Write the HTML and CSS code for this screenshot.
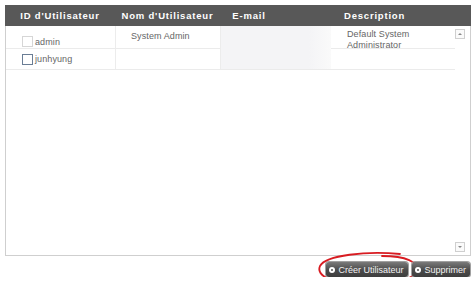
FILE: index.html
```html
<!DOCTYPE html>
<html>
<head>
<meta charset="utf-8">
<link rel="stylesheet" href="styles.css">
</head>
<body>
<div class="wrap">
  <div class="thead">
    <div class="th">ID d'Utilisateur</div>
    <div class="th">Nom d'Utilisateur</div>
    <div class="th">E-mail</div>
    <div class="th">Description</div>
  </div>
  <div class="tbody">
    <div class="rows">
      <div class="row r1">
        <div class="td c1 idcell"><span class="cb cb-off"></span>admin</div>
        <div class="td c2 namecell">System Admin</div>
        <div class="td mail"></div>
        <div class="td desc">Default System<br>Administrator</div>
      </div>
      <div class="row r2">
        <div class="td c1 idcell"><span class="cb"></span>junhyung</div>
        <div class="td c2"></div>
        <div class="td mail"></div>
        <div class="td"></div>
      </div>
    </div>
    <div class="scroll">
      <div class="arrow up"><span class="tri tri-up"></span></div>
      <div class="arrow down"><span class="tri tri-down"></span></div>
    </div>
  </div>
  <div class="actions">
    <div class="btn create"><span class="dot"></span>Créer Utilisateur
      <svg class="circle" width="104" height="38" viewBox="0 0 104 38"><path d="M84 2 C 50 -1, 10 3, 4 14 C 0 23, 14 31, 40 33 C 66 35, 96 30, 100 19 C 103 10, 90 4, 66 4 M 40 33 C 36 35, 34 36, 32 37" fill="none" stroke="#d81c22" stroke-width="1.8" stroke-linecap="round"/></svg>
    </div>
    <div class="btn"><span class="dot"></span>Supprimer</div>
  </div>
</div>
</body>
</html>
```
FILE: styles.css
```css
html, body { margin: 0; padding: 0; background: #fff; }
body { font-family: "Liberation Sans", Arial, sans-serif; color: #666; }
.wrap { width: 466px; margin: 5px 0 0 5px; }
.thead { display: grid; grid-template-columns: 110px 105px 58px 1fr; height: 21px; background: #585858; }
.th { color: #fff; font-weight: bold; font-size: 9.5px; letter-spacing: 0.8px; display: flex; align-items: center; justify-content: center; }
.tbody { display: flex; height: 229px; border: 1px solid #cfcfcf; border-top: none; }
.rows { flex: 1; }
.row { display: grid; grid-template-columns: 110px 105px 110px 1fr; border-bottom: 1px solid #ebebeb; }
.r1 { height: 22px; }
.r2 { height: 20px; }
.td { font-size: 9px; letter-spacing: 0.1px; color: #666; display: flex; }
.c1, .c2 { border-right: 1px solid #ececec; }
.mail { background: linear-gradient(to right, #f4f4f6 80%, #fafafa 100%); }
.idcell { align-items: flex-end; padding: 0 0 4px 16px; }
.r2 .idcell { align-items: center; padding: 0 0 0 16px; }
.namecell { padding: 5px 0 0 15px; }
.desc { padding: 3px 0 0 16px; line-height: 11px; }
.cb { width: 11px; height: 11px; border: 1px solid #d6d6d6; background: #fff; margin-right: 2px; box-sizing: border-box; flex: none; }
.r1 .cb { margin-bottom: 0; }
.r2 .cb { border-color: #6a7d95; }
.scroll { width: 15px; display: flex; flex-direction: column; justify-content: space-between; padding: 3px 0 3px 0; }
.arrow { width: 10px; height: 10px; border: 1px solid #cfcfcf; box-sizing: border-box; display: flex; align-items: center; justify-content: center; background: #fafafa; }
.tri { width: 0; height: 0; border-left: 2px solid transparent; border-right: 2px solid transparent; }
.tri-up { border-bottom: 2px solid #888; }
.tri-down { border-top: 2px solid #888; }
.actions { display: flex; justify-content: flex-end; gap: 4px; margin-top: 6px; padding-right: 1px; }
.btn { position: relative; height: 15px; padding: 0 4px 0 3px; border-radius: 3px; background: linear-gradient(#7a7a7a, #4a4a4a 55%, #3e3e3e); color: #f4f4f4; font-size: 9px; display: flex; align-items: center; box-shadow: 0 0 0 1px #a0a0a0; }
.create { padding-right: 5px; }
.dot { width: 6px; height: 6px; border-radius: 50%; background: #fff; margin-right: 3px; position: relative; }
.dot::after { content: ""; position: absolute; left: 2px; top: 2px; width: 2px; height: 2px; border-radius: 50%; background: #555; }
.circle { position: absolute; left: -10px; top: -10px; pointer-events: none; }
```
